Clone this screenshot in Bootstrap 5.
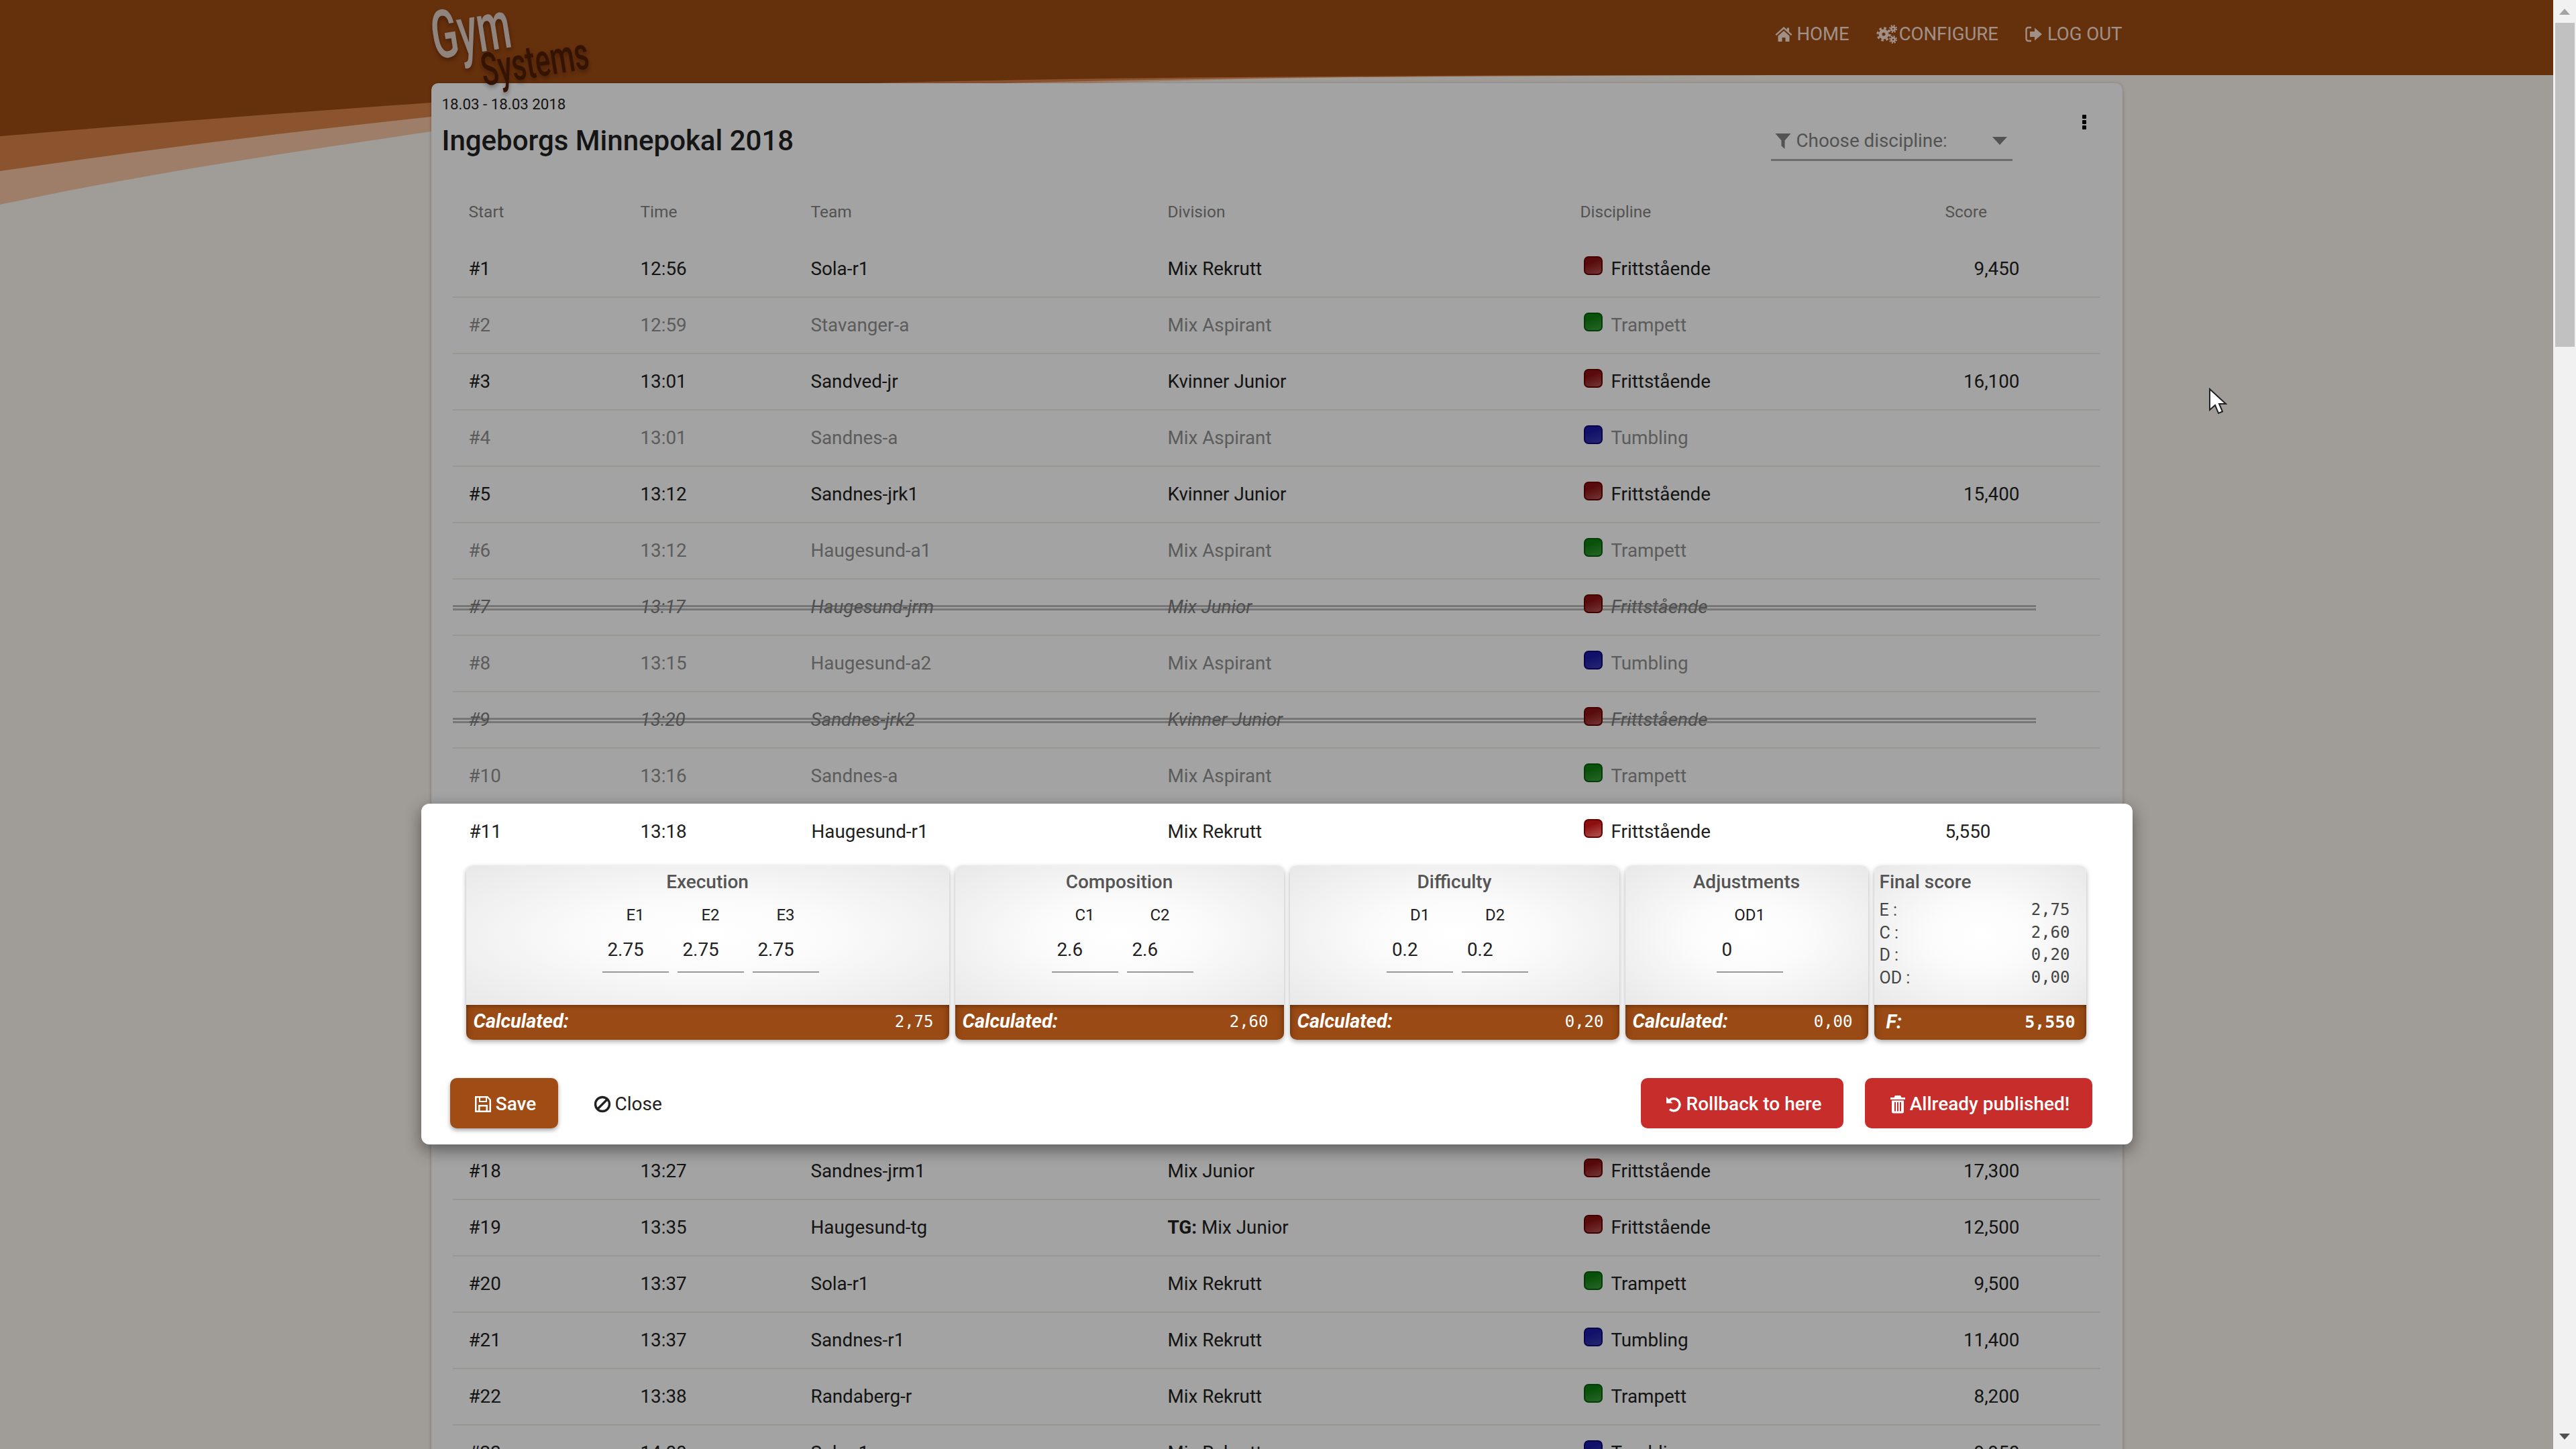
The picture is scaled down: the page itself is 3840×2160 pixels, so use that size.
<!DOCTYPE html>
<html lang="en">
<head>
  <meta charset="UTF-8" />
  <meta name="viewport" content="width=device-width, initial-scale=1" />
  <title>GymSystems - Ingeborgs Minnepokal 2018</title>
  <link href="https://cdn.jsdelivr.net/npm/bootstrap@5.3.0/dist/css/bootstrap.min.css" rel="stylesheet" />
  <style>
    html, body { height: 100%; }
    body { font-family: Roboto, "Liberation Sans", sans-serif; font-size: 27.8px; background: #faf4ee; color: #212121; overflow: hidden; }
    .ico { fill: currentColor; flex: none; }

    .page-area { width: 3806px; height: 2160px; overflow: hidden; }
    .swoosh { position: absolute; left: 0; top: 0; }
    .head-bar { height: 112px; background: #9f4b14; }
    .head-inner, .main-card { width: 2521px; }
    .brand { position: absolute; left: 0; top: 0; z-index: 3; }
    .brand span { position: absolute; display: block; transform-origin: left bottom; white-space: nowrap; font-weight: 500; line-height: 1; }
    .brand-gym { left: 8px; top: 4px; font-size: 100px; color: #e0cfc5; transform: rotate(-9deg) scaleX(.58); text-shadow: 0 4px 8px rgba(0,0,0,.3); }
    .brand-sys { left: 80px; top: 71px; font-size: 68px; color: #521f06; transform: rotate(-9.5deg) scaleX(.615); text-shadow: 0 4px 8px rgba(0,0,0,.3); }
    .top-link { font-size: 27.5px; color: #fae1d4; text-decoration: none; text-transform: uppercase; display: flex; align-items: center; gap: 6px; }
    .head-links { gap: 40px; padding-top: 30px; }
    .gap-cog { gap: 3px; }
    .gap-out { gap: 8px; }

    .main-card { position: relative; margin-top: 12px; background: #fff; border: 0; border-radius: 10px 10px 0 0; box-shadow: 0 1px 5px rgba(0,0,0,.25); min-height: 2100px; }
    .card-top { height: 152px; padding: 16px 0 0 16px; }
    .date-line { font-size: 22.3px; line-height: 30px; }
    .cup-title { font-size: 42px; font-weight: 500; line-height: 56px; margin: 12px 0 0; }
    .disc-select { width: 360px; height: 58px; margin: 42px 0 0 auto; border-bottom: 3px solid #aaa; padding: 0 8px 0 6px; color: #838383; }
    .disc-select .caret { width: 0; height: 0; border: 11px solid transparent; border-top: 12px solid #838383; border-bottom: 0; margin-left: auto; }
    .kebab { width: 6px; margin: 31px 54px 0 104px; gap: 2px; }
    .kebab i { display: block; width: 6px; height: 6px; border-radius: 1px; background: #000; }

    .start-table { width: 2456px; margin: 0 0 0 32px; table-layout: fixed; --bs-table-bg: transparent; font-size: 27.8px; }
    .start-table th { font-size: 24.5px; font-weight: 400; color: #828282; height: 83px; padding: 0 24px 3px; border-bottom: 0; vertical-align: middle; }
    .start-table td { height: 84px; padding: 0 24px; border-bottom: 2px solid #f0e9e1; vertical-align: middle; color: #212121; }
    .start-table td.score-cell { text-align: right; padding-right: 120px; }
    .start-table .no-line td { border-bottom: 0; padding: 0; }
    .start-table .pending td { color: #909090; }
    .start-table .scratched td { color: #7d7d7d; font-style: italic; }
    /* double line behind the text of a withdrawn team */
    .start-table tr.scratched { background: linear-gradient(#b9b9b9 0 3px, transparent 3px 5px, #b9b9b9 5px 8px) no-repeat 0 39px / 2360px 8px; }

    .disc-dot { display: inline-block; width: 28px; height: 28px; border-radius: 7px; border: 2px solid; margin: 0 13px 0 5px; vertical-align: 0; }
    .dot-red { border-color: #6b0000; background: linear-gradient(160deg, #8c1010 30%, #b25454); }
    .dot-green { border-color: #0a5f0a; background: linear-gradient(160deg, #0e7f10 30%, #3ea03e); }
    .dot-blue { border-color: #0a0a78; background: linear-gradient(160deg, #1b1ba8 30%, #3c3cb0); }

    .dim-layer { position: absolute; inset: 0; background: rgba(0,0,0,.36); z-index: 4; }
    .score-sheet { position: absolute; left: 0; right: 0; top: 1198px; width: 2551px; height: 508px; margin: 0 auto; background: #fff; border-radius: 12px; box-shadow: 0 8px 24px rgba(0,0,0,.45); z-index: 5; }
    .sheet-row { display: grid; grid-template-columns: 255px 255px 531px 620px 539px auto; height: 84px; align-items: center; padding-left: 72px; }
    .sheet-row .disc-dot { margin-left: 0; }
    .panel-row { gap: 9px; margin: 8px 0 0 67px; }
    .score-panel { height: 260px; border-radius: 10px; overflow: hidden; box-shadow: 0 3px 7px rgba(0,0,0,.32); }
    .panel-body { height: 208px; background: radial-gradient(ellipse at center, #fff 0%, #fbfbfb 35%, #e8e8e8 100%); text-align: center; }
    .panel-title { font-size: 28px; font-weight: 500; color: #555; line-height: 50px; height: 50px; }
    .judge { width: 99px; }
    .judge-label { font-size: 24px; height: 48px; line-height: 48px; }
    .judge-input.form-control { width: 99px; height: 62px; padding: 0 8px 6px; font-size: 27.8px; color: #212121; background: transparent; border: 0; border-bottom: 2px solid #999; border-radius: 0; }
    .judges { gap: 13px; padding-left: 9px; }
    .panel-foot { height: 52px; padding: 0 23px 2px 11px; background: #9a4a14; color: #fff; box-shadow: inset 0 5px 5px -3px rgba(0,0,0,.3), inset 10px 0 8px -8px rgba(0,0,0,.25), inset -10px 0 8px -8px rgba(0,0,0,.25); }
    .foot-label { font-size: 29px; font-weight: 700; font-style: italic; }
    .mono-val { font-family: "DejaVu Sans Mono", "Liberation Mono", monospace; font-size: 24px; }
    .final-body { text-align: left; padding: 0 24px 0 8px; }
    .final-line { font-size: 25px; line-height: 33.7px; color: #444; }
    .final-line .mono-val { color: #444; }
    .sheet-actions { margin-top: 57px; padding: 0 60px 0 43px; }
    .act-btn.btn { height: 75px; font-size: 28px; font-weight: 500; border: 0; border-radius: 10px; color: #fff; display: flex; align-items: center; gap: 6px; padding: 2px 0 0 4px; justify-content: center; }
    .act-save.btn { width: 161px; background: #a04c14; box-shadow: 0 3px 6px rgba(0,0,0,.35); }
    .act-close.btn { color: #212121; font-weight: 400; margin-left: 53px; padding-left: 0; }
    .act-red.btn { background: #c62d2b; }
    .act-rollback { width: 302px; }
    .act-published { width: 339px; margin-left: 32px; }

    .fake-scroll { width: 34px; height: 2160px; background: #f1f1f1; }
    .fake-scroll .arrow-box { height: 34px; }
    .fake-thumb { height: 483px; margin: 0 2px 0 3px; background: #c1c1c1; }
    .tri { width: 0; height: 0; border-left: 8px solid transparent; border-right: 8px solid transparent; }
    .tri-up { border-bottom: 9px solid #a3a3a3; }
    .tri-down { border-top: 9px solid #505050; margin-bottom: 14px; }
    .mouse-arrow { position: absolute; left: 3292px; top: 578px; z-index: 6; }
  </style>
</head>
<body class="d-flex">

  <svg width="0" height="0" class="position-absolute">
    <symbol id="i-home" viewBox="0 0 26 24"><path d="M13 1 .5 12.2 2 14 13 4.2 24 14l1.5-1.8-4.5-4V2.5h-3.2v2.8z"/><path d="M4.5 14.6 13 7l8.500 7.600V23H15.500v-6h-5v6H4.500z"/></symbol>
    <symbol id="i-gears" viewBox="0 0 31 28">
      <g fill="none" stroke="currentColor">
        <circle cx="11" cy="14" r="5" stroke-width="5"/><circle cx="11" cy="14" r="9" stroke-width="3.400" stroke-dasharray="3.500 3.570"/>
        <circle cx="25" cy="6" r="2.600" stroke-width="2.800"/><circle cx="25" cy="6" r="5" stroke-width="2.200" stroke-dasharray="2 1.930"/>
        <circle cx="25" cy="22" r="2.600" stroke-width="2.800"/><circle cx="25" cy="22" r="5" stroke-width="2.200" stroke-dasharray="2 1.930"/>
      </g>
    </symbol>
    <symbol id="i-out" viewBox="0 0 25 24"><path d="M9 2H4.500A3 3 0 0 0 1.500 5v14a3 3 0 0 0 3 3H9" fill="none" stroke="currentColor" stroke-width="2.400"/><path d="M7 8h7V2.500L25 12 14 21.500V16H7z"/></symbol>
    <symbol id="i-filter" viewBox="0 0 24 24"><path d="M.5 1h23L14.500 11.500V24l-5-4.500v-8z"/></symbol>
    <symbol id="i-save" viewBox="0 0 26 26"><path fill-rule="evenodd" d="M1 1h19l5 5v19H1zM3.500 3.500v19H6V14h14v8.500h2.500V7l-3-3.500H19V10H7V3.500zM9 3.500V8h8V3.500zM8.500 16.500v6h9v-6z"/></symbol>
    <symbol id="i-ban" viewBox="0 0 26 26"><circle cx="13" cy="13" r="10.500" fill="none" stroke="currentColor" stroke-width="3.400"/><path d="M5.500 20.500 20.500 5.500" stroke="currentColor" stroke-width="3.400"/></symbol>
    <symbol id="i-undo" viewBox="0 0 26 26"><path d="M6.500 7.500A9 9 0 1 1 7 20.500" fill="none" stroke="currentColor" stroke-width="3.600"/><path d="M2 2v9.500h9.500z"/></symbol>
    <symbol id="i-trash" viewBox="0 0 24 28"><path fill-rule="evenodd" d="M8 1h8l1.500 3H23v3H1V4h5.500zM3 8.500h18V25a2.500 2.500 0 0 1-2.500 2.500h-13A2.500 2.500 0 0 1 3 25zM7 11v13.500h2V11zM11 11v13.500h2V11zM15 11v13.500h2V11z"/></symbol>
  </svg>

  <div class="page-area position-relative flex-shrink-0">
    <svg class="swoosh" width="3806" height="320" viewBox="0 0 3806 320">
      <path fill="#f8c6a4" d="M0 0H2680V112C1950 110 1150 122 643 196 400 232 200 262 0 305z"/>
      <path fill="#d98349" d="M0 0H2640V112C1900 114 1200 116 643 174 400 200 200 226 0 255z"/>
      <path fill="#9f4b14" d="M0 0H2607V112C1900 112 1150 116 643 153 400 170 200 186 0 203z"/>
    </svg>

    <header class="head-bar position-relative">
      <div class="head-inner mx-auto position-relative d-flex justify-content-end">
        <div class="brand">
          <span class="brand-gym">Gym</span>
          <span class="brand-sys">Systems</span>
        </div>
        <nav class="head-links d-flex">
          <a class="top-link" href="#"><svg class="ico" width="26" height="24"><use href="#i-home"/></svg>Home</a>
          <a class="top-link gap-cog" href="#"><svg class="ico" width="31" height="28"><use href="#i-gears"/></svg>Configure</a>
          <a class="top-link gap-out" href="#"><svg class="ico" width="25" height="24"><use href="#i-out"/></svg>Log out</a>
        </nav>
      </div>
    </header>

    <div class="card main-card mx-auto">
      <div class="card-top d-flex">
        <div>
          <div class="date-line">18.03 - 18.03 2018</div>
          <h1 class="cup-title">Ingeborgs Minnepokal 2018</h1>
        </div>
        <div class="disc-select d-flex align-items-center">
          <svg class="ico me-2" width="24" height="24"><use href="#i-filter"/></svg>
          <span>Choose discipline:</span>
          <span class="caret"></span>
        </div>
        <div class="kebab d-flex flex-column"><i></i><i></i><i></i></div>
      </div>

      <table class="table start-table">
        <colgroup>
          <col style="width:256px"><col style="width:254px"><col style="width:532px"><col style="width:615px"><col style="width:544px"><col style="width:255px">
        </colgroup>
        <thead>
          <tr><th>Start</th><th>Time</th><th>Team</th><th>Division</th><th>Discipline</th><th>Score</th></tr>
        </thead>
        <tbody id="start-rows"></tbody>
      </table>
    </div>

    <div class="dim-layer"></div>

    <div class="score-sheet">
      <div class="sheet-row">
        <span>#11</span><span>13:18</span><span>Haugesund-r1</span><span>Mix Rekrutt</span>
        <span><i class="disc-dot dot-red"></i>Frittstående</span><span>5,550</span>
      </div>

      <div class="panel-row d-flex" id="panels">
        <div class="score-panel" style="width:316px">
          <div class="panel-body final-body">
            <div class="panel-title">Final score</div>
            <div class="final-line d-flex justify-content-between"><span>E :</span><span class="mono-val">2,75</span></div>
            <div class="final-line d-flex justify-content-between"><span>C :</span><span class="mono-val">2,60</span></div>
            <div class="final-line d-flex justify-content-between"><span>D :</span><span class="mono-val">0,20</span></div>
            <div class="final-line d-flex justify-content-between"><span>OD :</span><span class="mono-val">0,00</span></div>
          </div>
          <div class="panel-foot d-flex justify-content-between align-items-center" style="padding:0 16px 0 18px">
            <span class="foot-label">F:</span><span class="mono-val fw-bold" style="font-size:25px">5,550</span>
          </div>
        </div>
      </div>

      <div class="sheet-actions d-flex">
        <button class="btn act-btn act-save"><svg class="ico" width="26" height="26"><use href="#i-save"/></svg>Save</button>
        <button class="btn act-btn act-close"><svg class="ico" width="26" height="26"><use href="#i-ban"/></svg>Close</button>
        <button class="btn act-btn act-red act-rollback ms-auto"><svg class="ico" width="26" height="26"><use href="#i-undo"/></svg>Rollback to here</button>
        <button class="btn act-btn act-red act-published"><svg class="ico" width="24" height="28"><use href="#i-trash"/></svg>Allready published!</button>
      </div>
    </div>

    <svg class="mouse-arrow" width="28" height="40" viewBox="0 0 28 40"><path d="M2 2V33L10 26 15 38 21 35.500 16 24H26z" fill="#fff" stroke="#222" stroke-width="2"/></svg>
  </div>

  <div class="fake-scroll d-flex flex-column align-items-center">
    <div class="arrow-box d-flex align-items-center justify-content-center w-100"><span class="tri tri-up"></span></div>
    <div class="fake-thumb align-self-stretch"></div>
    <span class="tri tri-down mt-auto"></span>
  </div>

  <script>
    // F = Frittstående, T = Trampett, U = Tumbling
    const disciplinas = {
      F: ["dot-red", "Frittstående"],
      T: ["dot-green", "Trampett"],
      U: ["dot-blue", "Tumbling"]
    };

    // estado: "" normal, "pending" sin puntuar, "scratched" retirado
    const filas = [
      ["#1", "12:56", "Sola-r1", "Mix Rekrutt", "F", "9,450", ""],
      ["#2", "12:59", "Stavanger-a", "Mix Aspirant", "T", "", "pending"],
      ["#3", "13:01", "Sandved-jr", "Kvinner Junior", "F", "16,100", ""],
      ["#4", "13:01", "Sandnes-a", "Mix Aspirant", "U", "", "pending"],
      ["#5", "13:12", "Sandnes-jrk1", "Kvinner Junior", "F", "15,400", ""],
      ["#6", "13:12", "Haugesund-a1", "Mix Aspirant", "T", "", "pending"],
      ["#7", "13:17", "Haugesund-jrm", "Mix Junior", "F", "", "scratched"],
      ["#8", "13:15", "Haugesund-a2", "Mix Aspirant", "U", "", "pending"],
      ["#9", "13:20", "Sandnes-jrk2", "Kvinner Junior", "F", "", "scratched"],
      ["#10", "13:16", "Sandnes-a", "Mix Aspirant", "T", "", "pending"],
      null,
      ["#18", "13:27", "Sandnes-jrm1", "Mix Junior", "F", "17,300", ""],
      ["#19", "13:35", "Haugesund-tg", "<b>TG:</b> Mix Junior", "F", "12,500", ""],
      ["#20", "13:37", "Sola-r1", "Mix Rekrutt", "T", "9,500", ""],
      ["#21", "13:37", "Sandnes-r1", "Mix Rekrutt", "U", "11,400", ""],
      ["#22", "13:38", "Randaberg-r", "Mix Rekrutt", "T", "8,200", ""],
      ["#23", "14:00", "Sola-r1", "Mix Rekrutt", "U", "9,950", ""]
    ];

    const cuerpo = document.getElementById("start-rows");
    filas.forEach(f => {
      if (!f) {
        // the rows under the open score sheet
        cuerpo.insertAdjacentHTML("beforeend", `<tr class="no-line"><td colspan="6" style="height:505px"></td></tr>`);
        return;
      }
      const d = disciplinas[f[4]];
      cuerpo.insertAdjacentHTML("beforeend", `
        <tr class="${f[6]}">
          <td>${f[0]}</td><td>${f[1]}</td><td>${f[2]}</td><td>${f[3]}</td>
          <td><i class="disc-dot ${d[0]}"></i>${d[1]}</td>
          <td class="score-cell">${f[5]}</td>
        </tr>`);
    });

    const paneles = [
      { titulo: "Execution", ancho: 720, jueces: [["E1", "2.75"], ["E2", "2.75"], ["E3", "2.75"]], calc: "2,75" },
      { titulo: "Composition", ancho: 490, jueces: [["C1", "2.6"], ["C2", "2.6"]], calc: "2,60" },
      { titulo: "Difficulty", ancho: 491, jueces: [["D1", "0.2"], ["D2", "0.2"]], calc: "0,20" },
      { titulo: "Adjustments", ancho: 362, jueces: [["OD1", "0"]], calc: "0,00" }
    ];

    const final = document.querySelector("#panels .score-panel");
    paneles.forEach(p => {
      const jueces = p.jueces.map(j => `
        <div class="judge">
          <div class="judge-label">${j[0]}</div>
          <input class="form-control judge-input" value="${j[1]}">
        </div>`).join("");
      final.insertAdjacentHTML("beforebegin", `
        <div class="score-panel" style="width:${p.ancho}px">
          <div class="panel-body">
            <div class="panel-title">${p.titulo}</div>
            <div class="judges d-flex justify-content-center">${jueces}</div>
          </div>
          <div class="panel-foot d-flex justify-content-between align-items-center">
            <span class="foot-label">Calculated:</span><span class="mono-val">${p.calc}</span>
          </div>
        </div>`);
    });
  </script>

  <script src="https://cdn.jsdelivr.net/npm/bootstrap@5.3.0/dist/js/bootstrap.bundle.min.js"></script>
</body>
</html>
